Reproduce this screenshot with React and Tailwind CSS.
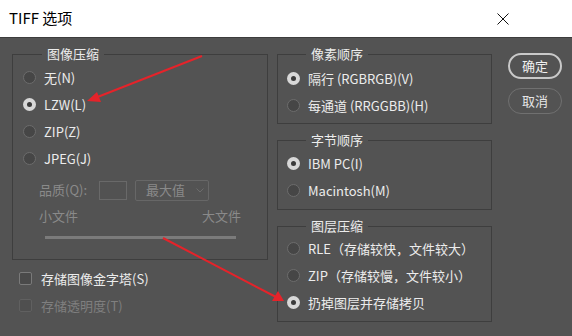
import React from 'react';

const font = { fontFamily: '"Noto Sans CJK SC", "Noto Sans", sans-serif' };

function Radio({ checked, label }) {
  return (
    <div className="flex items-center h-[27px]">
      {checked ? (
        <span className="w-[13px] h-[13px] rounded-full bg-[#d8d8d8] flex items-center justify-center">
          <span className="w-[5px] h-[5px] rounded-full bg-[#3a3a3a]" />
        </span>
      ) : (
        <span className="w-[13px] h-[13px] rounded-full bg-[#464646] border border-[#6c6c6c]" />
      )}
      <span className="ml-[8px] text-[13px] text-[#ececec] whitespace-nowrap">{label}</span>
    </div>
  );
}

function Group({ title, className, children }) {
  return (
    <fieldset className={'border border-[#3e3e3e] ' + className}>
      <legend className="ml-[19px] px-[5px] text-[13px] leading-[18px] text-[#ececec]">{title}</legend>
      {children}
    </fieldset>
  );
}

function Check({ label, disabled }) {
  return (
    <div className="flex items-center h-[27px]">
      <span
        className={
          'w-[13px] h-[13px] rounded-[2px] border ' +
          (disabled ? 'border-[#606060] bg-[#4f4f4f]' : 'border-[#7a7a7a] bg-[#4a4a4a]')
        }
      />
      <span className={'ml-[9px] text-[13px] whitespace-nowrap ' + (disabled ? 'text-[#7f7f7f]' : 'text-[#ececec]')}>
        {label}
      </span>
    </div>
  );
}

export default function App() {
  return (
    <div className="w-[572px] h-[336px] relative overflow-hidden bg-[#535353]" style={font}>
      {/* Title bar */}
      <div className="h-[38px] bg-white flex items-center justify-between pl-[9px] pr-[63px] border-b border-[#3c3c3c]">
        <span className="text-[15px] text-black">TIFF 选项</span>
        <svg width="12" height="12" viewBox="0 0 12 12">
          <path d="M0.5 0.5 L11.5 11.5 M11.5 0.5 L0.5 11.5" stroke="#111" strokeWidth="1" />
        </svg>
      </div>

      {/* Body */}
      <div className="flex pl-[12px] pt-[7px]">
        {/* Left column */}
        <div className="w-[256px]">
          <Group title="图像压缩" className="h-[215px] pl-[10px] pt-[1px]">
            <Radio label="无(N)" />
            <Radio checked label="LZW(L)" />
            <Radio label="ZIP(Z)" />
            <Radio label="JPEG(J)" />
            <div className="flex items-center mt-[7px] h-[22px] pl-[16px] text-[13px] text-[#8a8a8a]">
              <span>品质(Q):</span>
              <span className="ml-[12px] w-[28px] h-[19px] border border-[#696969] bg-[#525252]" />
              <span className="ml-[8px] w-[74px] h-[21px] border border-[#676767] rounded-[2px] flex items-center justify-between pl-[10px] pr-[4px]">
                <span>最大值</span>
                <svg width="8" height="5" viewBox="0 0 8 5">
                  <path d="M0.5 0.5 L4 4 L7.5 0.5" fill="none" stroke="#6c6c6c" strokeWidth="1" />
                </svg>
              </span>
            </div>
            <div className="flex justify-between mt-[5px] pl-[16px] pr-[26px] text-[13px] text-[#8a8a8a]">
              <span>小文件</span>
              <span>大文件</span>
            </div>
            <div className="ml-[22px] mt-[10px] w-[191px] h-[3px] bg-[#7b7b7b]" />
          </Group>
          <div className="pl-[7px] pt-[5px]">
            <Check label="存储图像金字塔(S)" />
            <Check disabled label="存储透明度(T)" />
          </div>
        </div>

        {/* Right column */}
        <div className="w-[215px] ml-[9px] flex flex-col gap-[7px]">
          <Group title="像素顺序" className="h-[79px] pl-[9px] pt-[2px]">
            <Radio checked label="隔行 (RGBRGB)(V)" />
            <Radio label="每通道 (RRGGBB)(H)" />
          </Group>
          <Group title="字节顺序" className="h-[79px] pl-[9px] pt-[1px]">
            <Radio checked label="IBM PC(I)" />
            <Radio label="Macintosh(M)" />
          </Group>
          <Group title="图层压缩" className="h-[105px] pl-[9px] pt-[0px]">
            <Radio label="RLE（存储较快，文件较大）" />
            <Radio label="ZIP（存储较慢，文件较小）" />
            <Radio checked label="扔掉图层并存储拷贝" />
          </Group>
        </div>

        {/* Buttons */}
        <div className="ml-[16px] mt-[8px] flex flex-col gap-[9px]">
          <button className="w-[54px] h-[26px] rounded-full border-2 border-[#c9c9c9] text-[13px] text-[#f0f0f0]">确定</button>
          <button className="w-[54px] h-[26px] rounded-full border border-[#707070] text-[13px] text-[#e6e6e6]">取消</button>
        </div>
      </div>

      {/* Annotation arrows */}
      <svg className="absolute left-0 top-0 pointer-events-none" width="572" height="336">
        <line x1="202" y1="56" x2="95" y2="98" stroke="#e5232a" strokeWidth="2" />
        <polygon points="87,101 97,92 101,102" fill="#e5232a" />
        <line x1="163" y1="238" x2="276" y2="297" stroke="#e5232a" strokeWidth="2" />
        <polygon points="284,301 272,301 278,291" fill="#e5232a" />
      </svg>
    </div>
  );
}
